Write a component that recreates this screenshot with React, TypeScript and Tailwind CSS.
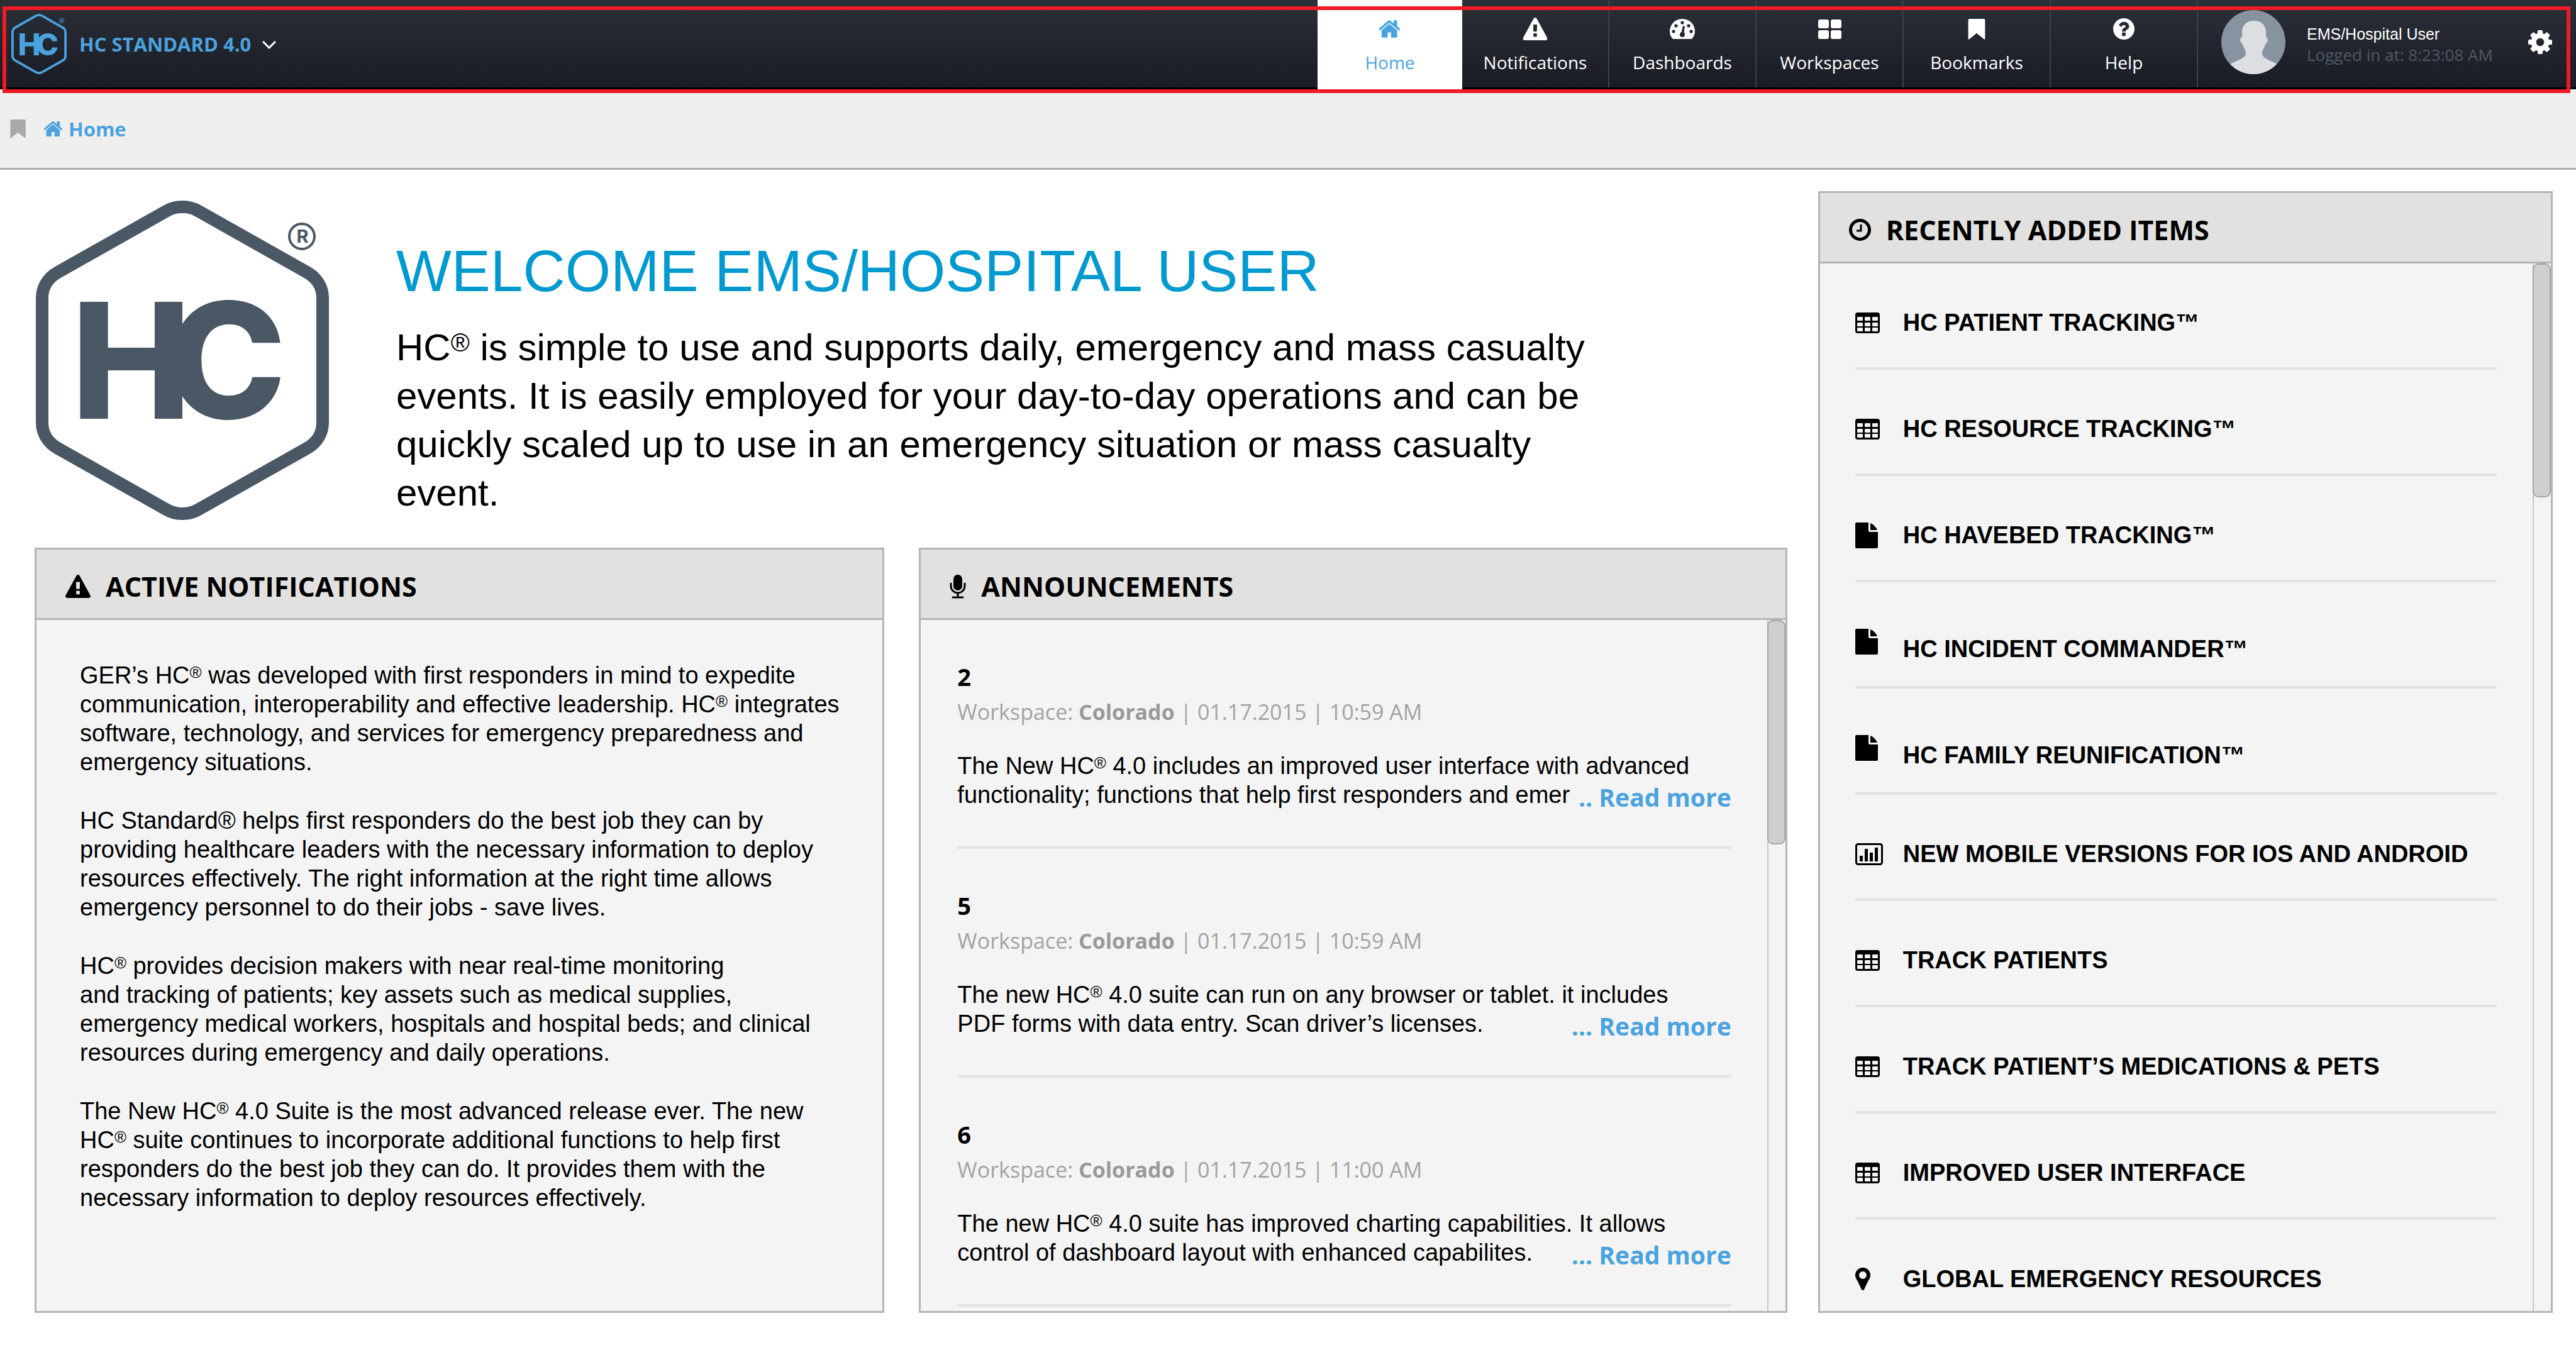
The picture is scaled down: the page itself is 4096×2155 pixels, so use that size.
import type { ReactNode } from "react";

type IconProps = { className?: string };

function HexLogo({ className }: IconProps) {
  return (
    <svg viewBox="0 0 466 508" className={className} role="img" aria-label="HC">
      <path
        d="M10 155 C10 138 19 123 35 114 L207 17 C215 12 224 10 233 10 C242 10 251 12 259 17 L431 114 C447 123 456 138 456 155 V353 C456 370 447 385 431 394 L259 491 C251 496 242 498 233 498 C224 498 215 496 207 491 L35 394 C19 385 10 370 10 353 Z"
        fill="none"
        stroke="currentColor"
        strokeWidth="20"
      />
      <text x="56" y="347" fontFamily="Inter" fontWeight="800" fontSize="256" fill="currentColor">
        H<tspan x="208">C</tspan>
      </text>
      <circle cx="423" cy="57" r="20" fill="none" stroke="currentColor" strokeWidth="4" />
      <text x="424" y="67" textAnchor="middle" fontFamily="Inter" fontWeight="700" fontSize="29" fill="currentColor">
        R
      </text>
    </svg>
  );
}

function HomeIcon({ className }: IconProps) {
  return (
    <svg viewBox="80 253 1632 1283" className={className} fill="currentColor" aria-hidden="true">
      <path d="M1408 992v480q0 26-19 45t-45 19h-384v-384h-256v384h-384q-26 0-45-19t-19-45v-480q0-1 .5-3t.5-3l575-474 575 474q1 2 1 6zm223-69l-62 74q-8 9-21 11h-3q-13 0-21-7l-692-577-692 577q-12 8-24 7-13-2-21-11l-62-74q-8-10-7-23.5t11-21.5l719-599q32-26 76-26t76 26l244 204v-195q0-14 9-23t23-9h192q14 0 23 9t9 23v408l219 182q10 8 11 21.5t-7 23.5z" />
    </svg>
  );
}

function WarningIcon({ className }: IconProps) {
  return (
    <svg viewBox="0 0 1792 1664" className={className} fill="currentColor" aria-hidden="true">
      <path d="M1024 1375v-190q0-14-9.500-23.500t-22.500-9.500h-192q-13 0-22.500 9.500t-9.500 23.500v190q0 14 9.500 23.500t22.500 9.500h192q13 0 22.500-9.500t9.500-23.500zm-2-374l18-459q0-12-10-19-13-11-24-11h-220q-11 0-24 11-10 7-10 21l17 457q0 10 10 16.500t24 6.500h185q14 0 23.500-6.500t10.500-16.500zm-14-934l768 1408q35 63-2 126-17 29-46.500 46t-63.500 17h-1536q-34 0-63.500-17t-46.500-46q-37-63-2-126l768-1408q17-31 47-49t65-18 65 18 47 49z" />
    </svg>
  );
}

function DashboardIcon({ className }: IconProps) {
  return (
    <svg viewBox="0 0 40 32" className={className} aria-hidden="true">
      <path d="M5 32 C2 29 0 25 0 20 A20 20 0 0 1 40 20 C40 25 38 29 35 32 Z" fill="currentColor" />
      <g fill="#22262e">
        <circle cx="6" cy="20" r="2.600" />
        <circle cx="10" cy="11" r="2.600" />
        <circle cx="20" cy="6" r="2.600" />
        <circle cx="30" cy="11" r="2.600" />
        <circle cx="34" cy="20" r="2.600" />
        <circle cx="20" cy="25" r="4" />
        <path d="M21 11 L24 12 L22 25 L18 24 Z" />
      </g>
    </svg>
  );
}

function WorkspacesIcon({ className }: IconProps) {
  return (
    <svg viewBox="0 0 37 31" className={className} fill="currentColor" aria-hidden="true">
      <rect x="0" y="0" width="17" height="14" rx="3" />
      <rect x="20" y="0" width="17" height="14" rx="3" />
      <rect x="0" y="17" width="17" height="14" rx="3" />
      <rect x="20" y="17" width="17" height="14" rx="3" />
    </svg>
  );
}

function BookmarkIcon({ className }: IconProps) {
  return (
    <svg viewBox="0 0 26 32" className={className} fill="currentColor" aria-hidden="true">
      <path d="M2 0 H24 Q26 0 26 2 V30 Q26 33 24 31 L13 22 L2 31 Q0 33 0 30 V2 Q0 0 2 0 Z" />
    </svg>
  );
}

function HelpIcon({ className }: IconProps) {
  return (
    <svg viewBox="128 128 1536 1536" className={className} fill="currentColor" aria-hidden="true">
      <path d="M1024 1376v-192q0-14-9-23t-23-9h-192q-14 0-23 9t-9 23v192q0 14 9 23t23 9h192q14 0 23-9t9-23zm256-672q0-88-55.500-163t-138.500-116-170-41q-243 0-371 213-15 24 8 42l132 100q7 6 19 6 16 0 25-12 53-68 86-92 34-24 86-24 48 0 85.500 26t37.500 59q0 38-20 61t-68 45q-63 28-115.500 86.500t-52.500 125.500v36q0 14 9 23t23 9h192q14 0 23-9t9-23q0-19 21.500-49.500t54.500-49.500q32-18 49-28.500t46-35 44.500-48 28-60.500 12.500-81zm384 192q0 209-103 385.500t-279.500 279.500-385.500 103-385.500-103-279.500-279.500-103-385.500 103-385.500 279.500-279.500 385.500-103 385.500 103 279.500 279.500 103 385.500z" />
    </svg>
  );
}

function CogIcon({ className }: IconProps) {
  return (
    <svg viewBox="128 128 1536 1536" className={className} fill="currentColor" aria-hidden="true">
      <path d="M1152 896q0-106-75-181t-181-75-181 75-75 181 75 181 181 75 181-75 75-181zm512-109v222q0 12-8 23t-20 13l-185 28q-19 54-39 91 35 50 107 138 10 12 10 25t-9 23q-27 37-99 108t-94 71q-12 0-26-9l-138-108q-44 23-91 38-16 136-29 186-7 28-36 28h-222q-14 0-24.500-8.500t-11.500-21.500l-28-184q-49-16-90-37l-141 107q-10 9-25 9-14 0-25-11-126-114-165-168-7-10-7-23 0-12 8-23 15-21 51-66.500t54-70.500q-27-50-41-99l-183-27q-13-2-21-12.500t-8-23.500v-222q0-12 8-23t19-13l186-28q14-46 39-92-40-57-107-138-10-12-10-24 0-10 9-23 26-36 98.500-107.500t94.500-71.500q13 0 26 10l138 107q44-23 91-38 16-136 29-186 7-28 36-28h222q14 0 24.500 8.500t11.500 21.500l28 184q49 16 90 37l142-107q9-9 24-9 13 0 25 10 129 119 165 170 7 8 7 22 0 12-8 23-15 21-51 66.500t-54 70.500q26 50 41 98l183 28q13 2 21 12.500t8 23.500z" />
    </svg>
  );
}

function Avatar({ className }: IconProps) {
  return (
    <svg viewBox="0 0 103 103" className={className} role="img" aria-label="User">
      <defs>
        <clipPath id="avatar-disc">
          <circle cx="51" cy="51" r="51" />
        </clipPath>
      </defs>
      <g clipPath="url(#avatar-disc)">
        <rect width="103" height="103" fill="#8793a0" />
        <path
          d="M52 17 C40 17 33 24 33 36 V43 C29 44 29 51 34 54 C35 60 39 63 39 69 C39 77 26 79 12 87 V103 H91 V87 C77 79 65 77 65 69 C65 63 69 60 70 54 C75 51 75 44 71 43 V36 C71 24 64 17 52 17 Z"
          fill="#dcdee2"
        />
      </g>
    </svg>
  );
}

function ChevronIcon({ className }: IconProps) {
  return (
    <svg viewBox="0 0 22 13" className={className} fill="none" stroke="currentColor" strokeWidth="3" aria-hidden="true">
      <path d="M1 1 L11 11 L21 1" />
    </svg>
  );
}

function MicIcon({ className }: IconProps) {
  return (
    <svg viewBox="0 0 26 38" className={className} aria-hidden="true">
      <rect x="6" y="0" width="14" height="25" rx="7" fill="currentColor" />
      <path d="M2 14 V18 A11 11 0 0 0 24 18 V14 M13 29 V36 M5 36 H21" fill="none" stroke="currentColor" strokeWidth="3" strokeLinecap="round" />
    </svg>
  );
}

function ClockIcon({ className }: IconProps) {
  return (
    <svg viewBox="0 0 35 35" className={className} fill="none" stroke="currentColor" aria-hidden="true">
      <circle cx="17.500" cy="17.500" r="15" strokeWidth="5" />
      <path d="M19 9 V19 H12" strokeWidth="3" />
    </svg>
  );
}

function TableIcon({ className }: IconProps) {
  const cells = [3, 15, 27].flatMap((x) => [7, 16, 24].map((y) => ({ x, y })));
  return (
    <svg viewBox="0 0 39 33" className={className} aria-hidden="true">
      <rect width="39" height="33" rx="4" fill="currentColor" />
      {cells.map(({ x, y }) => (
        <rect key={`${x}-${y}`} x={x} y={y} width="9" height="6" rx="1" fill="#f4f4f4" />
      ))}
    </svg>
  );
}

function FileIcon({ className }: IconProps) {
  return (
    <svg viewBox="0 0 36 41" className={className} fill="currentColor" aria-hidden="true">
      <path d="M2 0 H21 V13 Q21 15 23 15 H36 V39 Q36 41 34 41 H2 Q0 41 0 39 V2 Q0 0 2 0 Z" />
      <path d="M24 1 Q28 2 31 6 Q34 9 35 12 H24 Z" />
    </svg>
  );
}

function ChartIcon({ className }: IconProps) {
  return (
    <svg viewBox="0 0 44 35" className={className} aria-hidden="true">
      <rect x="1.500" y="1.500" width="41" height="32" rx="3" fill="none" stroke="currentColor" strokeWidth="3" />
      <g fill="currentColor">
        <rect x="7" y="20" width="5" height="9" />
        <rect x="15" y="9" width="5" height="20" />
        <rect x="23" y="15" width="5" height="14" />
        <rect x="31" y="7" width="5" height="22" />
      </g>
    </svg>
  );
}

function PinIcon({ className }: IconProps) {
  return (
    <svg viewBox="0 0 24 36" className={className} fill="currentColor" fillRule="evenodd" aria-hidden="true">
      <path d="M12 0 A12 12 0 0 1 24 12 C24 16 22 19 20 22 L14 35 Q12 37 10 35 L4 22 C2 19 0 16 0 12 A12 12 0 0 1 12 0 Z M12 6 A6 6 0 1 0 12 18 A6 6 0 1 0 12 6 Z" />
    </svg>
  );
}

/** Registered mark, set as a small superscript that leaves the line height alone. */
function Reg() {
  return <sup className="top-0 align-[0.34em] text-[0.68em] leading-none">®</sup>;
}

const navItems = [
  { label: "Notifications", icon: <WarningIcon className="h-[36px] w-[40px]" /> },
  { label: "Dashboards", icon: <DashboardIcon className="h-[32px] w-[40px]" /> },
  { label: "Workspaces", icon: <WorkspacesIcon className="h-[31px] w-[37px]" /> },
  { label: "Bookmarks", icon: <BookmarkIcon className="h-[33px] w-[28px]" /> },
  { label: "Help", icon: <HelpIcon className="h-[34px] w-[34px]" /> },
];

function TopBar() {
  return (
    <header className="relative flex h-[142px] border-b-[3px] border-black bg-linear-to-b from-[#2b2f38] to-[#191c24] font-['Open_Sans',sans-serif] text-white">
      <div className="flex flex-1 items-center pl-[18px]">
        <HexLogo className="h-[96px] w-[88px] text-[#4aa3df]" />
        <button type="button" className="ml-[20px] flex items-center gap-[18px] text-[31px] leading-[42px] font-bold text-[#4aa3df]">
          HC STANDARD 4.0
          <ChevronIcon className="mt-1 h-[13px] w-[22px] text-white" />
        </button>
      </div>
      <nav className="flex text-[28px] leading-[38px]">
        <a href="#home" className="-mb-[3px] flex w-[230px] flex-col items-center bg-white pt-[26px] text-[#4aa3df]">
          <span className="mb-[14px] flex h-[40px] items-center">
            <HomeIcon className="h-[28px] w-[35px]" />
          </span>
          Home
        </a>
        {navItems.map(({ label, icon }) => (
          <a key={label} href={`#${label.toLowerCase()}`} className="flex w-[234px] flex-col items-center border-r-2 border-[#3b414d] pt-[26px]">
            <span className="mb-[14px] flex h-[40px] items-center">{icon}</span>
            {label}
          </a>
        ))}
      </nav>
      <div className="flex w-[601px] items-start pl-[37px]">
        <Avatar className="mt-[16px] h-[103px] w-[103px]" />
        <div className="ml-[33px] flex-1 pt-[38px]">
          <p className="font-['Liberation_Sans',sans-serif] text-[25px] leading-[32px]">EMS/Hospital User</p>
          <p className="text-[26px] leading-[34px] text-[#4d5964]">Logged in at: 8:23:08 AM</p>
        </div>
        <button type="button" aria-label="Settings" className="mt-[48px] mr-[38px]">
          <CogIcon className="h-[38px] w-[38px]" />
        </button>
      </div>
      <div className="pointer-events-none absolute top-[10px] right-[9px] -bottom-[9px] left-[4px] border-[6px] border-[#ed1c24]" />
    </header>
  );
}

function Breadcrumb() {
  return (
    <div className="flex h-[128px] items-center border-b-[3px] border-[#acacac] bg-[#efefef] pl-[16px] font-['Open_Sans',sans-serif]">
      <BookmarkIcon className="h-[30px] w-[25px] text-[#a9a9a9]" />
      <a href="#home" className="ml-[29px] flex items-center gap-[8px] text-[31px] leading-[42px] font-bold text-[#4aa3df]">
        <HomeIcon className="h-[24px] w-[31px]" />
        Home
      </a>
    </div>
  );
}

function Panel({ icon, title, thumb, headClass, children }: { icon: ReactNode; title: string; thumb?: string; headClass: string; children: ReactNode }) {
  return (
    <section className="flex flex-col border-[3px] border-[#b5b5b5] bg-[#f4f4f4]">
      <div className={`flex h-[112px] items-center border-b-[3px] border-[#b5b5b5] bg-[#e2e1df] pt-[8px] ${headClass}`}>
        {icon}
        <h2 className="font-['Open_Sans',sans-serif] text-[43px] leading-[58px] font-bold">{title}</h2>
      </div>
      <div className="flex flex-1">
        <div className="min-w-0 flex-1">{children}</div>
        {thumb && (
          <div className="w-[29px] border-l-2 border-[#c8c8c8]">
            <div className={`-ml-[2px] rounded-[9px] border-2 border-[#a6a6a6] bg-[#cfcfcf] ${thumb}`} />
          </div>
        )}
      </div>
    </section>
  );
}

const announcements = [
  {
    id: "2",
    time: "10:59 AM",
    dots: "..",
    body: (
      <>
        The New HC
        <Reg /> 4.0 includes an improved user interface with advanced
        <br />
        functionality; functions that help first responders and emer
      </>
    ),
  },
  {
    id: "5",
    time: "10:59 AM",
    dots: "...",
    body: (
      <>
        The new HC
        <Reg /> 4.0 suite can run on any browser or tablet. it includes
        <br />
        PDF forms with data entry. Scan driver’s licenses.
      </>
    ),
  },
  {
    id: "6",
    time: "11:00 AM",
    dots: "...",
    body: (
      <>
        The new HC
        <Reg /> 4.0 suite has improved charting capabilities. It allows
        <br />
        control of dashboard layout with enhanced capabilites.
      </>
    ),
  },
];

const recent = [
  { title: "HC PATIENT TRACKING™", kind: "table" },
  { title: "HC RESOURCE TRACKING™", kind: "table" },
  { title: "HC HAVEBED TRACKING™", kind: "file" },
  { title: "HC INCIDENT COMMANDER™", kind: "file", low: true },
  { title: "HC FAMILY REUNIFICATION™", kind: "file", low: true },
  { title: "NEW MOBILE VERSIONS FOR IOS AND ANDROID", kind: "chart" },
  { title: "TRACK PATIENTS", kind: "table" },
  { title: "TRACK PATIENT’S MEDICATIONS & PETS", kind: "table" },
  { title: "IMPROVED USER INTERFACE", kind: "table" },
  { title: "GLOBAL EMERGENCY RESOURCES", kind: "pin" },
];

const kindIcons: Record<string, ReactNode> = {
  table: <TableIcon className="h-[33px] w-[39px]" />,
  file: <FileIcon className="h-[41px] w-[36px]" />,
  chart: <ChartIcon className="h-[35px] w-[44px]" />,
  pin: <PinIcon className="h-[36px] w-[24px]" />,
};

export default function App() {
  return (
    <div className="flex min-h-screen flex-col bg-white font-['Liberation_Sans',Arial,sans-serif] text-black">
      <TopBar />
      <Breadcrumb />
      <main className="grid flex-1 grid-cols-[2786fr_1168fr] gap-[49px] pt-[34px] pr-[37px] pb-[67px] pl-[55px]">
        <div className="flex flex-col">
          <div className="flex h-[567px] pt-[15px] pl-[2px]">
            <HexLogo className="h-[508px] w-[466px] shrink-0 text-[#4a5866]" />
            <div className="ml-[107px] pt-[60px]">
              <h1 className="text-[93px] leading-[104px] whitespace-nowrap text-[#0099d0]">WELCOME EMS/HOSPITAL USER</h1>
              <p className="mt-[31px] text-[60px] leading-[77px]">
                HC
                <Reg /> is simple to use and supports daily, emergency and mass casualty
                <br />
                events. It is easily employed for your day-to-day operations and can be
                <br />
                quickly scaled up to use in an emergency situation or mass casualty
                <br />
                event.
              </p>
            </div>
          </div>
          <div className="grid flex-1 grid-cols-[1351fr_1380fr] gap-[55px]">
            <Panel icon={<WarningIcon className="h-[37px] w-[40px]" />} title="ACTIVE NOTIFICATIONS" headClass="gap-[24px] pl-[46px]">
              <div className="flex flex-col gap-[47px] pt-[65px] pl-[69px] text-[38px] leading-[46px]">
                <p>
                  GER’s HC
                  <Reg /> was developed with first responders in mind to expedite
                  <br />
                  communication, interoperability and effective leadership. HC
                  <Reg /> integrates
                  <br />
                  software, technology, and services for emergency preparedness and
                  <br />
                  emergency situations.
                </p>
                <p>
                  HC Standard® helps first responders do the best job they can by
                  <br />
                  providing healthcare leaders with the necessary information to deploy
                  <br />
                  resources effectively. The right information at the right time allows
                  <br />
                  emergency personnel to do their jobs - save lives.
                </p>
                <p>
                  HC
                  <Reg /> provides decision makers with near real-time monitoring
                  <br />
                  and tracking of patients; key assets such as medical supplies,
                  <br />
                  emergency medical workers, hospitals and hospital beds; and clinical
                  <br />
                  resources during emergency and daily operations.
                </p>
                <p>
                  The New HC
                  <Reg /> 4.0 Suite is the most advanced release ever. The new
                  <br />
                  HC
                  <Reg /> suite continues to incorporate additional functions to help first
                  <br />
                  responders do the best job they can do. It provides them with the
                  <br />
                  necessary information to deploy resources effectively.
                </p>
              </div>
            </Panel>
            <Panel icon={<MicIcon className="h-[38px] w-[26px]" />} title="ANNOUNCEMENTS" thumb="h-[357px]" headClass="gap-[24px] pl-[46px]">
              <div className="pr-[57px] pl-[58px]">
                {announcements.map(({ id, time, dots, body }) => (
                  <article key={id} className="border-b-[4px] border-[#e1e2e2] pt-[63px] pb-[59px]">
                    <h3 className="font-['Open_Sans',sans-serif] text-[38px] leading-[54px] font-bold">{id}</h3>
                    <p className="font-['Open_Sans',sans-serif] text-[34px] leading-[58px] text-[#a3a3a3]">
                      Workspace: <b className="text-[#999999]">Colorado</b> | 01.17.2015 | {time}
                    </p>
                    <div className="relative mt-[34px]">
                      <p className="text-[38px] leading-[46px]">{body}</p>
                      <a href={`#announcement-${id}`} className="absolute right-0 -bottom-[8px] font-['Open_Sans',sans-serif] text-[39px] leading-[54px] font-bold text-[#4aa3df]">
                        {dots} Read more
                      </a>
                    </div>
                  </article>
                ))}
              </div>
            </Panel>
          </div>
        </div>
        <Panel icon={<ClockIcon className="h-[35px] w-[35px]" />} title="RECENTLY ADDED ITEMS" thumb="h-[372px]" headClass="gap-[24px] pl-[46px]">
          <ul className="pr-[57px] pl-[56px]">
            {recent.map(({ title, kind, low }) => (
              <li key={title} className="flex h-[169px] items-center border-b-[4px] border-[#e1e2e2] pt-[23px] last:h-[145px] last:items-start last:border-b-0 last:pt-[71px]">
                <span className="flex h-[46px] w-[76px] items-center">{kindIcons[kind]}</span>
                <a href="#item" className={`text-[38px] leading-[46px] font-bold whitespace-nowrap ${low ? "pt-6" : ""}`}>
                  {title}
                </a>
              </li>
            ))}
          </ul>
        </Panel>
      </main>
    </div>
  );
}
